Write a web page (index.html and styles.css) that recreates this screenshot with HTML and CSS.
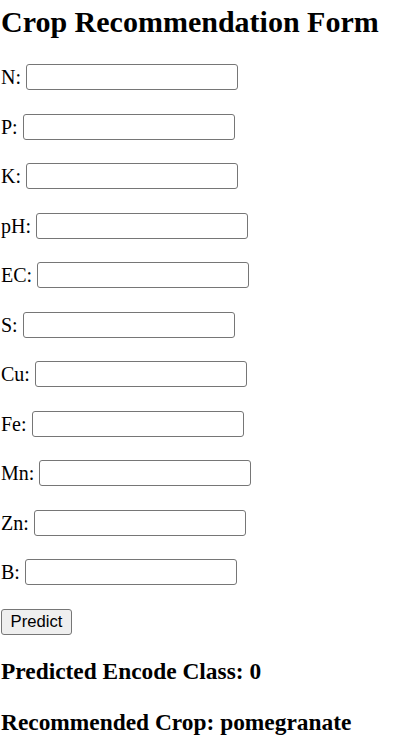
FILE: index.html
```html
<!DOCTYPE html>
<html lang="en">
<head>
<meta charset="utf-8">
<title>Crop Recommendation Form</title>
<link rel="stylesheet" href="styles.css">
</head>
<body>
<h2 class="title">Crop Recommendation Form</h2>
<form class="form">
  <div class="row"><label for="n">N:</label><input id="n" type="text"></div>
  <div class="row"><label for="p">P:</label><input id="p" type="text"></div>
  <div class="row"><label for="k">K:</label><input id="k" type="text"></div>
  <div class="row"><label for="ph">pH:</label><input id="ph" type="text"></div>
  <div class="row"><label for="ec">EC:</label><input id="ec" type="text"></div>
  <div class="row"><label for="s">S:</label><input id="s" type="text"></div>
  <div class="row"><label for="cu">Cu:</label><input id="cu" type="text"></div>
  <div class="row"><label for="fe">Fe:</label><input id="fe" type="text"></div>
  <div class="row"><label for="mn">Mn:</label><input id="mn" type="text"></div>
  <div class="row"><label for="zn">Zn:</label><input id="zn" type="text"></div>
  <div class="row"><label for="b">B:</label><input id="b" type="text"></div>
  <div class="row"><button type="button" class="btn">Predict</button></div>
  <h3 class="result">Predicted Encode Class: 0</h3>
  <h3 class="result">Recommended Crop: pomegranate</h3>
</form>
</body>
</html>
```
FILE: styles.css
```css
html, body {
  background: #ffffff;
}
body {
  margin: 0;
  padding: 5px 0 0 1px;
  font-family: "Liberation Serif", "Times New Roman", serif;
  font-size: 20px;
  color: #000000;
}
.title {
  margin: 0 0 25px 0;
  font-size: 30px;
  line-height: 34px;
  font-weight: bold;
}
.form {
  display: flex;
  flex-direction: column;
  gap: 23.5px;
}
.row {
  display: flex;
  align-items: center;
  gap: 5px;
  height: 26px;
}
.row label {
  line-height: 26px;
}
.row input {
  box-sizing: border-box;
  width: 212px;
  height: 26px;
  margin: 0;
  padding: 1px 3px;
  border: 1px solid #767676;
  border-radius: 3px;
  background: #ffffff;
  font-family: "Liberation Sans", Arial, sans-serif;
  font-size: 16.67px;
}
.btn {
  box-sizing: border-box;
  width: 71px;
  height: 26px;
  margin: 0;
  padding: 0 8px;
  border: 1px solid #767676;
  border-radius: 3px;
  background: #efefef;
  color: #000000;
  font-family: "Liberation Sans", Arial, sans-serif;
  font-size: 16.67px;
}
.result {
  margin: 0;
  font-size: 23.4px;
  line-height: 27px;
  font-weight: bold;
}
```
